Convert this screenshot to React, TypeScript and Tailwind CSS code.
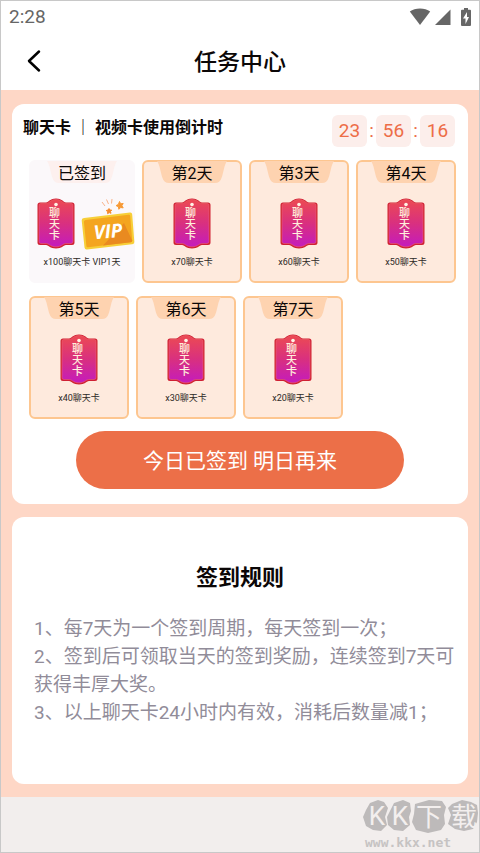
import React from 'react';

interface Reward {
  label: string;
  caption: string;
  signed?: boolean;
  vip?: boolean;
}

const rewards: Reward[] = [
  { label: '已签到', caption: 'x100聊天卡 VIP1天', signed: true, vip: true },
  { label: '第2天', caption: 'x70聊天卡' },
  { label: '第3天', caption: 'x60聊天卡' },
  { label: '第4天', caption: 'x50聊天卡' },
  { label: '第5天', caption: 'x40聊天卡' },
  { label: '第6天', caption: 'x30聊天卡' },
  { label: '第7天', caption: 'x20聊天卡' },
];

const rules = [
  '1、每7天为一个签到周期，每天签到一次；',
  '2、签到后可领取当天的签到奖励，连续签到7天可获得丰厚大奖。',
  '3、以上聊天卡24小时内有效，消耗后数量减1；',
];

function StatusBar() {
  return (
    <div className="flex h-[31px] items-center justify-between pr-2 pl-2 text-[#666666]">
      <span className="text-[19px] leading-6">2:28</span>
      <div className="flex items-center">
        <svg width="22" height="18" viewBox="0 0 22 18" fill="currentColor" aria-hidden="true">
          <path d="M11 17 0.8 3.6C3.6 1.6 7 0.5 11 0.5s7.4 1.1 10.2 3.1z" />
        </svg>
        <svg className="ml-1" width="16" height="18" viewBox="0 0 16 18" fill="currentColor" aria-hidden="true">
          <path d="M15.5 1.5V17H0z" />
        </svg>
        <svg className="ml-2.5" width="10" height="18" viewBox="0 0 10 18" aria-hidden="true">
          <path fill="currentColor" d="M3 0h4v1.8h2a1 1 0 0 1 1 1V17a1 1 0 0 1-1 1H1a1 1 0 0 1-1-1V2.8a1 1 0 0 1 1-1h2z" />
          <path fill="#fff" d="M6 4 2 10.500H4.500V16L8 9H6z" />
        </svg>
      </div>
    </div>
  );
}

function ChatTicket() {
  return (
    <div className="grid shrink-0 justify-items-center">
      <svg className="col-start-1 row-start-1" width="38" height="51" viewBox="0 0 38 51" aria-hidden="true">
        <defs>
          <linearGradient id="ticket" x1="0" y1="0" x2="0" y2="1">
            <stop offset="0" stopColor="#ec4a52" />
            <stop offset="0.5" stopColor="#d9307f" />
            <stop offset="1" stopColor="#c41bbd" />
          </linearGradient>
        </defs>
        <path
          d="M3 4.500H9C12 4 13 0.500 19 0.500S26 4 29 4.500h6Q37.500 4.500 37.500 7V44.500Q37.500 47 35 47H29C26 47.500 25 50.500 19 50.500S12 47.500 9 47H3Q0.500 47 0.500 44.500V7Q0.500 4.500 3 4.500z"
          fill="#cf2033"
        />
        <path
          d="M3.500 5.500H9.500C12.500 5 13.500 1.500 19 1.500S25.500 5 28.500 5.500h6Q36 5.500 36 7.500V43.500Q36 45.500 34 45.500H28.500C25.500 46 24.500 48.800 19 48.800S12.500 46 9.500 45.500H4Q2 45.500 2 43.500V7.500Q2 5.500 3.500 5.500z"
          fill="url(#ticket)"
          stroke="#ef6a74"
          strokeWidth="0.5"
        />
        <circle cx="19" cy="6.500" r="1.800" fill="#fff5e6" />
      </svg>
      <span className="col-start-1 row-start-1 pt-[9px] pr-[3px] font-['Noto_Sans_CJK_SC',sans-serif] text-[11px] leading-[14px] font-medium whitespace-nowrap text-[#fff0dd] [writing-mode:vertical-rl]">
        聊天卡
      </span>
    </div>
  );
}

function VipTicket() {
  return (
    <svg className="shrink-0" width="54" height="54" viewBox="0 0 54 54" role="img" aria-label="VIP">
      <path d="M3 20 49 14.500Q51 14.300 51.200 16.500L53.300 43.500Q53.500 46 51 46.300L6 51.500Q3.800 51.700 3.500 49.500L0.700 22.500Q0.500 20.300 3 20z" fill="#f7cf38" />
      <path d="M4.500 22 47.500 16.800Q49 16.600 49.200 18L51.200 42.500Q51.300 44 49.800 44.200L7 49.200Q5.600 49.400 5.400 48L2.900 24Q2.800 22.300 4.500 22z" fill="#f4a51f" />
      <path d="M22 47.500 43 25 51.200 42.500Q51.300 44 49.800 44.200z" fill="#e98a20" />
      <path d="m38.500 3.500 1.100 2.300 2.600-.3-1.300 2.200 1.300 2.200-2.500-.4-1.800 1.800-.5-2.500-2.300-1.200 2.300-1.200z" fill="#f79a35" stroke="#f79a35" />
      <path d="m28 10.500.8 1.500 1.900.1-1.200 1.400.5 1.800-1.800-.7-1.600 1.100.1-2-1.500-1.200 1.900-.5z" fill="#f58a2c" stroke="#f58a2c" />
      <path d="m21 4 3 4M25.500 1.500l2 4.500M31 1l-.5 4.500" fill="none" stroke="#f8b38a" />
      <text
        x="27"
        y="40"
        transform="rotate(-5 27 34)"
        textAnchor="middle"
        fill="#ffffff"
        fontFamily="Open Sans, sans-serif"
        fontSize="19"
        fontStyle="italic"
        fontWeight="700"
      >
        VIP
      </text>
    </svg>
  );
}

function RewardCard({ reward }: { reward: Reward }) {
  const frame = reward.signed
    ? 'w-[106px] border-[#fbf8fa] bg-[#fbf8fa]'
    : 'w-[100px] border-[#fdc690] bg-[#feeadd]';

  return (
    <li className={`flex h-[123px] flex-col items-center rounded-md border-2 ${frame}`}>
      <div className="-mt-0.5 grid h-[22px] w-[70px] shrink-0 place-items-center">
        <svg className="col-start-1 row-start-1" width="70" height="22" viewBox="0 0 70 22" aria-hidden="true">
          <path d="M0 0H70C67 4 66.500 12 64.500 17Q63 22 58 22H12Q7 22 5.500 17C3.500 12 3 4 0 0z" fill={reward.signed ? '#fdf0ee' : '#fed3b0'} />
        </svg>
        <span className="col-start-1 row-start-1 pt-1 text-base leading-5 whitespace-nowrap">{reward.label}</span>
      </div>
      <div className={`mt-4 flex h-[52px] w-full shrink-0 items-start gap-1.5 ${reward.vip ? 'pl-1.5' : 'justify-center'}`}>
        <ChatTicket />
        {reward.vip && <VipTicket />}
      </div>
      <p className="mt-1.5 text-[9px] leading-3 whitespace-nowrap text-[#2d2926]">{reward.caption}</p>
    </li>
  );
}

function Countdown({ parts }: { parts: string[] }) {
  return (
    <div className="flex items-center text-[19px] leading-8 text-[#ed6d47]">
      {parts.map((part, i) => (
        <React.Fragment key={i}>
          {i > 0 && <span className="w-[9px] text-center">:</span>}
          <span className="w-[35px] rounded-md bg-[#fceeeb] text-center">{part}</span>
        </React.Fragment>
      ))}
    </div>
  );
}

function Watermark() {
  return (
    <div className="pt-0.5 text-[#bdbaba]">
      <svg width="116" height="36" viewBox="0 0 116 36" role="img" aria-label="KK下载">
        <g fill="currentColor">
          <path d="m7 4 8-3 6 2 4 6-3 9 2 8-6 6-8-1-7-4-3-9 3-7z" />
          <path d="m31 4 9-3 7 3 1 8-2 6 1 8-7 6-9-1-6-5-1-8 4-8z" />
          <path d="m52 5 14-4 13 1 4 6-2 8 1 9-4 6-13 3-12-3-4-8 2-8z" />
          <path d="m89 5 10-4 9 2 6 3 1 8-1 9-4 7-9 2-9-2-7-5 3-9-3-7z" />
        </g>
        <g fill="#f3efee" fontSize="26" fontWeight="400" textAnchor="middle">
          <text x="14" y="26">K</text>
          <text x="37" y="26">K</text>
          <text x="66" y="27">下</text>
          <text x="101" y="27">载</text>
        </g>
      </svg>
      <p className="pl-0.5 font-['DejaVu_Sans_Mono',monospace] text-[13px] leading-4 font-bold text-[#c6c3c3]">www.kkx.net</p>
    </div>
  );
}

export default function App() {
  return (
    <div className="flex min-h-screen flex-col border border-[#c8c8c8] bg-white font-[Roboto,'Noto_Sans_CJK_SC',sans-serif] text-[#0b0707]">
      <StatusBar />
      <header className="grid h-[58px] grid-cols-[64px_1fr_64px] items-center">
        <button type="button" aria-label="返回" className="flex h-10 items-center pl-[25px]">
          <svg width="16" height="24" viewBox="0 0 16 24" fill="none" stroke="#000" strokeWidth="2.5" strokeLinecap="round" strokeLinejoin="round" aria-hidden="true">
            <path d="M13 2.500 3 12l10 9.500" />
          </svg>
        </button>
        <h1 className="pt-1 text-center text-[23px] leading-8 font-medium">任务中心</h1>
      </header>

      <main className="flex flex-col gap-[13px] bg-[#fed7c6] px-[11px] pt-3.5 pb-[13px]">
        <section className="rounded-xl bg-white pt-[11px] pb-[15px]">
          <div className="flex items-start justify-between pr-[13px] pl-[11px]">
            <h2 className="text-base leading-[26px] font-bold">聊天卡 ｜ 视频卡使用倒计时</h2>
            <Countdown parts={['23', '56', '16']} />
          </div>

          <ul className="mt-[13px] flex flex-wrap gap-x-[7px] gap-y-[13px] pr-2 pl-[17px]">
            {rewards.map(reward => (
              <RewardCard key={reward.label} reward={reward} />
            ))}
          </ul>

          <div className="mt-3 px-16">
            <button type="button" className="h-[58px] w-full rounded-full bg-[#ec6f48] pt-1 text-[21px] text-white">
              今日已签到 明日再来
            </button>
          </div>
        </section>

        <section className="rounded-xl bg-white pt-[45px] pr-3 pb-[57px] pl-[22px]">
          <h2 className="pr-2.5 text-center text-[22px] leading-8 font-bold">签到规则</h2>
          <div className="mt-[21px] text-[19px] leading-7 text-[#918c99]">
            {rules.map(rule => (
              <p key={rule}>{rule}</p>
            ))}
          </div>
        </section>
      </main>

      <footer className="flex flex-1 justify-end bg-[#f2eeed]">
        <Watermark />
      </footer>
    </div>
  );
}
